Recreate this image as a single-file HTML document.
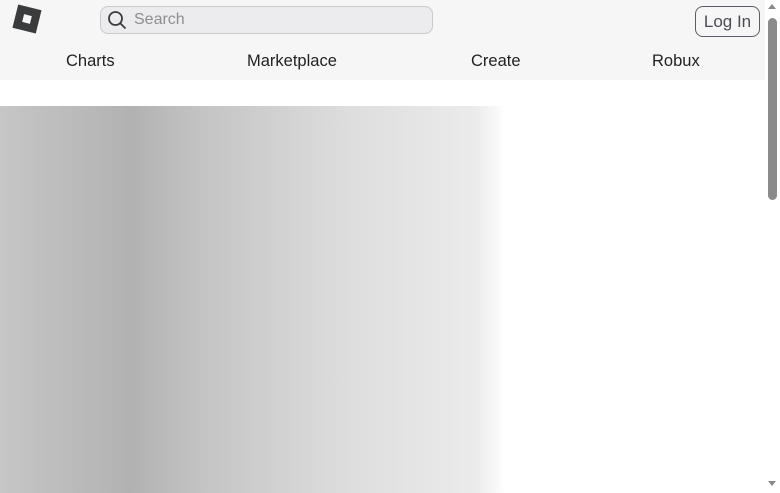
<!DOCTYPE html>
<html><head><style>
html,body{margin:0;padding:0;width:780px;height:493px;overflow:hidden;background:#fff;font-family:"Liberation Sans",sans-serif;}
.hdr{position:absolute;left:0;top:0;width:765px;height:80px;background:#f6f6f6;}
.logo{position:absolute;left:15px;top:7px;width:24px;height:24px;background:#393b3d;transform:rotate(14deg);}
.logo:after{content:"";position:absolute;left:8px;top:8px;width:8px;height:8px;background:#f6f6f6;}
.search{position:absolute;left:100px;top:6px;width:333px;height:28px;border:1px solid #c8cacd;border-radius:8px;background:#ececee;box-sizing:border-box;}
.search span{position:absolute;left:33px;top:4px;font-size:16px;color:#8c8e92;}
.login{position:absolute;left:695px;top:6px;width:65px;height:31px;border:1px solid #5a5e66;border-radius:8px;box-sizing:border-box;font-size:17px;color:#4a4d55;text-align:center;line-height:29px;}
.nav{position:absolute;top:52px;font-size:16.5px;color:#222;}
.grad{position:absolute;left:0;top:106px;width:505px;height:387px;background:linear-gradient(90deg,#c6c6c6 0%,#b2b2b2 26%,#c4c4c4 40%,#dedede 70%,#ebebeb 94%,#fafafa 99%,#fff 100%);}
.sb{position:absolute;left:765px;top:0;width:15px;height:493px;background:#fff;}
.thumb{position:absolute;left:768px;top:18px;width:9px;height:182px;background:#8b8b8b;border-radius:5px;}
</style></head><body>
<div class="hdr">
<div class="logo"></div>
<div class="search"><svg style="position:absolute;left:6px;top:3px" width="20" height="20" viewBox="0 0 20 20"><circle cx="8.5" cy="8.5" r="6.5" fill="none" stroke="#393b3d" stroke-width="1.8"/><line x1="13" y1="13" x2="18.5" y2="18.5" stroke="#393b3d" stroke-width="1.8"/></svg><span>Search</span></div>
<div class="login">Log In</div>
<div class="nav" style="left:66px">Charts</div>
<div class="nav" style="left:247px">Marketplace</div>
<div class="nav" style="left:471px">Create</div>
<div class="nav" style="left:652px">Robux</div>
</div>
<div class="grad"></div>
<div class="sb"></div><div class="thumb"></div>
<div style="position:absolute;left:768px;top:4px;width:0;height:0;border-left:4px solid transparent;border-right:4px solid transparent;border-bottom:5px solid #888"></div>
<div style="position:absolute;left:768px;top:481px;width:0;height:0;border-left:4px solid transparent;border-right:4px solid transparent;border-top:5px solid #888"></div>
</body></html>
